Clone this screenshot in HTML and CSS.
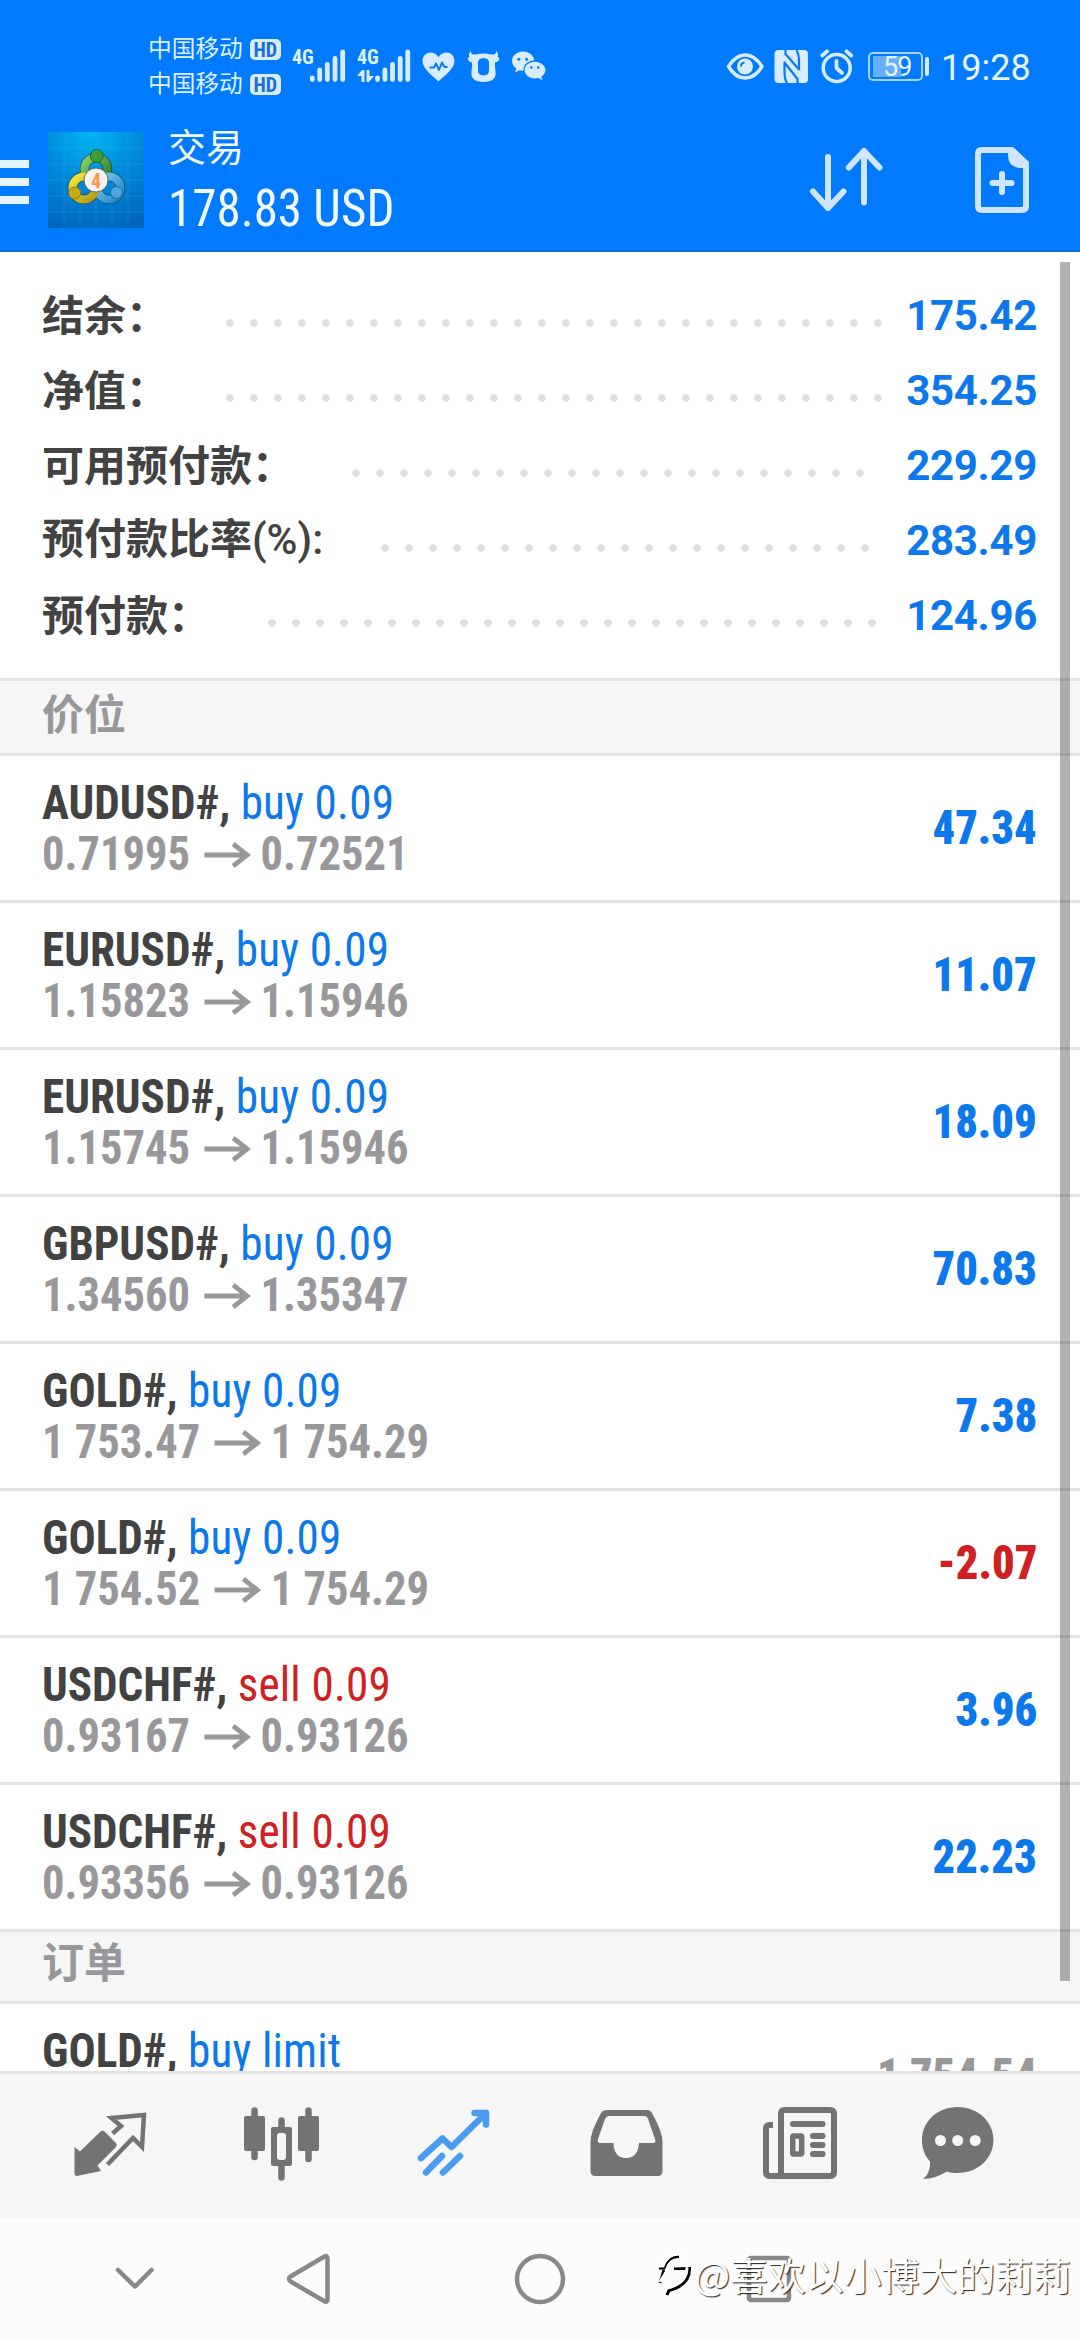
FILE: index.html
```html
<!DOCTYPE html>
<html lang="zh-CN">
<head>
<meta charset="utf-8">
<title>交易</title>
<link rel="stylesheet" href="styles.css">
</head>
<body>
<div class="screen">
  <header class="top">
    <div class="status">
      <div class="carriers">
        <div class="carrier">中国移动<span class="hd">HD</span></div>
        <div class="carrier">中国移动<span class="hd">HD</span></div>
      </div>
      <svg class="signal" viewBox="291 48 56 36" width="56" height="36">
        <text x="292" y="64" class="net">4G</text>
        <g class="bars"><path d="M312.3 77.800V79.500M319.700 70V79.500M327.300 64.300V79.500M335 58.300V79.500M342.700 51.800V79.500"/></g>
      </svg>
      <svg class="signal2" viewBox="356 48 56 36" width="56" height="36">
        <text x="357" y="64" class="net">4G</text>
        <g class="bars"><path d="M377.500 77.800V79.500M384.900 70V79.500M392.500 64.300V79.500M400.200 58.300V79.500M407.800 51.800V79.500"/></g>
        <path class="lit" d="M362 70h2.500v12h-3v-6h-4.500zM366.500 70h3v6h4.500l-5 6h-2.500z"/>
      </svg>
      <svg class="heart" viewBox="421 48 35 36" width="35" height="36">
        <path class="lit" d="M438.500 81.500C433 76 422.500 69 422.500 61C422.500 51.500 434 49.500 438.500 57C443 49.500 454.500 51.500 454.500 61C454.500 69 444 76 438.500 81.500Z"/>
        <path class="cut" stroke-width="1.900" d="M429.500 67.500H434L436 63.500L439 70L442 62.500L444.500 67H447.500"/>
      </svg>
      <svg class="ox" viewBox="467 48 33 36" width="33" height="36">
        <path class="lit" fill-rule="evenodd" d="M470.500 51C471 54 473 55 476 54.500Q483.500 52.500 491 54.500C494 55 496 54 496.500 51Q499 54.500 497.500 57L499.500 58Q499 62 495 62.500Q494.500 66 495.500 71Q497 82 483.500 82Q470 82 471.500 71Q472.500 66 472 62.500Q468 62 467.500 58L469.500 57Q468 54.500 470.500 51ZM483.500 58Q477.500 58 478 64V69Q477.500 75.500 483.500 75.500Q489.500 75.500 489 69V64Q489.500 58 483.500 58Z"/>
      </svg>
      <svg class="wechat" viewBox="511 48 36 36" width="36" height="36">
        <path class="lit" d="M523 51.500c-6.200 0-11 4.300-11 9.500c0 3.200 1.700 5.800 4.300 7.500l-1.300 4l4.500-2.300c1.500.5 3 .7 4.500.6c6-.2 10.300-4.500 10.300-9.800c0-5.200-5-9.500-11.300-9.500z"/>
        <ellipse cx="534.800" cy="70" rx="11.400" ry="9.800" fill="#007aff"/>
        <path class="lit" d="M534.800 61.800c-5.600 0-10.200 3.600-10.200 8.300s4.600 8.300 10.200 8.300c1.400 0 2.500-.2 3.600-.5l4 2.300l-1-3.500c2.500-1.600 4-3.900 4-6.600c0-4.700-5-8.300-10.600-8.300z"/>
        <g fill="#007aff"><circle cx="518.800" cy="59.200" r="1.500"/><circle cx="526.600" cy="59.200" r="1.500"/><circle cx="531.300" cy="67.500" r="1.300"/><circle cx="538.200" cy="67.500" r="1.300"/></g>
      </svg>
      <svg class="eye" viewBox="726 48 38 36" width="38" height="36">
        <path class="ln" stroke-width="3.500" d="M728.500 66.500Q735.500 55 745.200 55T762 66.500Q755 78 745.200 78T728.500 66.500Z"/>
        <circle class="lit" cx="745" cy="66.500" r="8"/>
        <path class="cut" stroke-width="2" d="M741 66.500Q741 63 744.500 62.500"/>
      </svg>
      <svg class="nfc" viewBox="774 48 35 36" width="35" height="36">
        <rect class="lit" x="774.500" y="50" width="33.500" height="33" rx="4"/>
        <path class="cut" stroke-width="2.200" d="M785.500 50V54L799 69.500V60Q799 54 796.500 50M797.500 83V79L784.500 62.500V72Q784.500 79 787 83"/>
      </svg>
      <svg class="alarm" viewBox="819 48 36 36" width="36" height="36">
        <circle class="ln" cx="836.700" cy="68" r="13.500" stroke-width="3.500"/>
        <path class="ln" stroke-width="3.800" d="M836.500 61V68L842 73M822.300 55.500L827 51.300M851.200 55.500L846.500 51.300"/>
      </svg>
      <div class="battery"><span class="level">59</span></div>
      <span class="cap"></span>
      <span class="clock">19:28</span>
    </div>
    <div class="appbar">
      <div class="menu"><i></i><i></i><i></i></div>
      <svg class="logo" viewBox="0 0 96 96" width="96" height="96">
        <defs>
          <radialGradient id="sky" cx=".45" cy="0" r="1.050"><stop offset="0" stop-color="#00b4f2"/><stop offset=".5" stop-color="#0089da"/><stop offset="1" stop-color="#0066bd"/></radialGradient>
          <linearGradient id="gr" x1="0" y1="0" x2="1" y2="1"><stop offset="0" stop-color="#8ccf6a"/><stop offset="1" stop-color="#237a22"/></linearGradient>
          <linearGradient id="ye" x1="0" y1="0" x2="1" y2="1"><stop offset="0" stop-color="#f2e63c"/><stop offset="1" stop-color="#b39a14"/></linearGradient>
          <linearGradient id="bl" x1="0" y1="0" x2="1" y2="1"><stop offset="0" stop-color="#7ccdf5"/><stop offset="1" stop-color="#2283c4"/></linearGradient>
        </defs>
        <rect width="96" height="96" fill="url(#sky)"/>
        <path d="M0 16H96M0 32H96M0 48H96M0 64H96M0 80H96M16 0V96M32 0V96M48 0V96M64 0V96M80 0V96" stroke="#5cc4f5" stroke-opacity=".16"/>
        <g fill="none" stroke="#14506a" stroke-width="9.500"><circle cx="48" cy="37" r="11.500"/><circle cx="36" cy="56" r="11.500"/><circle cx="61" cy="56" r="11.500"/></g>
        <g fill="none" stroke-width="8"><circle cx="48" cy="37" r="11.500" stroke="url(#gr)"/><circle cx="61" cy="56" r="11.500" stroke="url(#bl)"/><circle cx="36" cy="56" r="11.500" stroke="url(#ye)"/></g>
        <g stroke-width="1"><circle cx="48.700" cy="24" r="6.500" fill="#3f9a3a" stroke="#1c6b2a"/><circle cx="26.700" cy="61" r="6" fill="#c9a91c" stroke="#8f7c18"/><circle cx="68.500" cy="60.500" r="6" fill="#4aa6dc" stroke="#1b6ca5"/></g>
        <circle cx="48" cy="48" r="12" fill="#f4f2f4" stroke="#4a5a3a" stroke-width=".8"/>
        <text x="48" y="55.500" text-anchor="middle" class="four">4</text>
      </svg>
      <div class="heading">
        <div class="title">交易</div>
        <div class="balance">178.83 USD</div>
      </div>
      <svg class="sort" viewBox="808 144 78 72" width="78" height="72">
        <path class="act" d="M828 157V208M813 191.500L828 208L843.500 191.500M864 202.500V151M848.800 167.500L864 151L879.500 167.500"/>
      </svg>
      <svg class="newdoc" viewBox="972 144 60 72" width="60" height="72">
        <path class="act" stroke-linecap="butt" d="M982 150H1012L1026 164V206Q1026 210 1022 210H982Q978 210 978 206V154Q978 150 982 150Z"/>
        <path fill="#d0e5ff" d="M1008 148H1014L1029 162V168H1020Q1008 167 1008 155Z"/>
        <path class="act" d="M1002 174V192M992.500 183H1011.500"/>
      </svg>
    </div>
  </header>

  <main class="content">
    <section class="summary">
      <div class="sum"><span class="label">结余：</span><span class="dots" style="width:672px"></span><span class="num">175.42</span></div>
      <div class="sum"><span class="label">净值：</span><span class="dots" style="width:672px"></span><span class="num">354.25</span></div>
      <div class="sum"><span class="label">可用预付款：</span><span class="dots" style="width:528px"></span><span class="num">229.29</span></div>
      <div class="sum"><span class="label">预付款比率<span class="pct">(%):</span></span><span class="dots" style="width:504px"></span><span class="num">283.49</span></div>
      <div class="sum"><span class="label">预付款：</span><span class="dots" style="width:624px"></span><span class="num">124.96</span></div>
    </section>
    <h2 class="section first">价位</h2>
    <ul class="list">
      <li class="row"><div><p class="sym">AUDUSD#, <span class="buy">buy 0.09</span></p><p class="price">0.71995<svg class="arr" viewBox="0 0 50 26"><path d="M0 13H46M31 2L46 13L31 24"/></svg>0.72521</p></div><b class="val">47.34</b></li>
      <li class="row"><div><p class="sym">EURUSD#, <span class="buy">buy 0.09</span></p><p class="price">1.15823<svg class="arr" viewBox="0 0 50 26"><path d="M0 13H46M31 2L46 13L31 24"/></svg>1.15946</p></div><b class="val">11.07</b></li>
      <li class="row"><div><p class="sym">EURUSD#, <span class="buy">buy 0.09</span></p><p class="price">1.15745<svg class="arr" viewBox="0 0 50 26"><path d="M0 13H46M31 2L46 13L31 24"/></svg>1.15946</p></div><b class="val">18.09</b></li>
      <li class="row"><div><p class="sym">GBPUSD#, <span class="buy">buy 0.09</span></p><p class="price">1.34560<svg class="arr" viewBox="0 0 50 26"><path d="M0 13H46M31 2L46 13L31 24"/></svg>1.35347</p></div><b class="val">70.83</b></li>
      <li class="row"><div><p class="sym">GOLD#, <span class="buy">buy 0.09</span></p><p class="price">1 753.47<svg class="arr" viewBox="0 0 50 26"><path d="M0 13H46M31 2L46 13L31 24"/></svg>1 754.29</p></div><b class="val">7.38</b></li>
      <li class="row"><div><p class="sym">GOLD#, <span class="buy">buy 0.09</span></p><p class="price">1 754.52<svg class="arr" viewBox="0 0 50 26"><path d="M0 13H46M31 2L46 13L31 24"/></svg>1 754.29</p></div><b class="val loss">-2.07</b></li>
      <li class="row"><div><p class="sym">USDCHF#, <span class="sell">sell 0.09</span></p><p class="price">0.93167<svg class="arr" viewBox="0 0 50 26"><path d="M0 13H46M31 2L46 13L31 24"/></svg>0.93126</p></div><b class="val">3.96</b></li>
      <li class="row"><div><p class="sym">USDCHF#, <span class="sell">sell 0.09</span></p><p class="price">0.93356<svg class="arr" viewBox="0 0 50 26"><path d="M0 13H46M31 2L46 13L31 24"/></svg>0.93126</p></div><b class="val">22.23</b></li>
    </ul>
    <h2 class="section">订单</h2>
    <ul class="list">
      <li class="row"><p class="sym order">GOLD#, <span class="buy">buy limit</span></p><b class="val pending">1 754.54</b></li>
    </ul>
    <div class="scrollbar"></div>
  </main>

  <nav class="tabs">
    <svg viewBox="24 2074 172 144" width="172" height="144">
      <path class="g" d="M74.500 2147L80 2151.500L100.500 2131.500Q102.500 2130 104.500 2131.500L116 2143Q117.500 2145 116 2147L97.500 2165.500L101 2171L77 2176Q74.500 2176 74.500 2173Z"/>
      <path class="o" stroke-width="4.500" d="M112.600 2133.500L121 2126L111.500 2118L144 2115L142 2147L133 2138L107.500 2164.500"/>
    </svg>
    <svg viewBox="196 2074 172 144" width="172" height="144">
      <g class="g"><rect x="244" y="2116" width="21" height="35" rx="2"/><rect x="298" y="2116" width="21" height="35" rx="2"/><path fill-rule="evenodd" d="M273 2127H290Q292 2127 292 2129V2164Q292 2166 290 2166H273Q271 2166 271 2164V2129Q271 2127 273 2127ZM280 2133Q277 2133 277 2136V2157Q277 2160 280 2160H283Q286 2160 286 2157V2136Q286 2133 283 2133Z"/></g>
      <path class="o" stroke-width="6.500" stroke-linecap="round" d="M254.500 2110.500V2157M308.500 2110.500V2159M281.500 2120.500V2128M281.500 2165V2177.500"/>
    </svg>
    <svg viewBox="368 2074 172 144" width="172" height="144">
      <path class="on" d="M421 2158L442.500 2138.500L451.500 2147L486 2113M474.500 2113H486V2124.500M426 2172.500L442 2156M443 2172.500L460 2156"/>
    </svg>
    <svg viewBox="540 2074 172 144" width="172" height="144">
      <path class="g" fill-rule="evenodd" d="M607 2110H647Q651 2110 653 2115Q662.500 2132 662.500 2142V2171Q662.500 2176 657.500 2176H595.500Q590.500 2176 590.500 2171V2142Q590.500 2132 600 2115Q602 2110 607 2110ZM609 2116Q606.500 2116 605 2119L598 2139Q597 2143 600 2143H613.500Q614 2158 626 2158Q638 2158 639 2143H653Q656.500 2143 655 2139L648 2119Q647 2116 644 2116Z"/>
    </svg>
    <svg viewBox="712 2074 172 144" width="172" height="144">
      <path class="o" stroke-width="6" d="M773 2125H770Q766 2125 766 2129V2172Q766 2176 770 2176H781M784.500 2110H830Q834 2110 834 2114V2172Q834 2176 830 2176H781V2114Q781 2110 784.500 2110Z"/>
      <path class="o" stroke-width="6" stroke-linecap="round" d="M793 2124H822.500M813 2136H822.500M813 2145H822.500M813 2154H822.500"/>
      <rect class="o" stroke-width="5.500" x="792.700" y="2136" width="9" height="18" rx="1"/>
    </svg>
    <svg viewBox="884 2074 172 144" width="172" height="144">
      <path class="g" d="M957.700 2107C978 2107 993.500 2122 993.500 2140S978 2173 957.700 2173C953 2173 950 2172.500 947 2171.500C940 2176 931 2179 923 2179C928 2175 930.500 2169 930 2161.500C925 2156 922 2149 922 2140C922 2122 937 2107 957.700 2107Z"/>
      <g fill="#f6f6f6"><circle cx="940.500" cy="2140.500" r="5.500"/><circle cx="957.700" cy="2140.500" r="5.500"/><circle cx="975.200" cy="2140.500" r="5.500"/></g>
    </svg>
  </nav>

  <footer class="keys">
    <svg viewBox="50 2218 170 122" width="170" height="122"><path d="M118 2270L135 2286.500L151.500 2270"/></svg>
    <svg viewBox="220 2218 205 122" width="205" height="122"><path d="M290.500 2276.500L324.500 2256.500Q327.500 2255 327.500 2259V2299Q327.500 2303 324.500 2301.300L290.500 2281.500Q287.500 2279 290.500 2276.500Z"/></svg>
    <svg viewBox="425 2218 230 122" width="230" height="122"><circle cx="540" cy="2279" r="23"/></svg>
    <svg viewBox="655 2218 230 122" width="230" height="122"><rect x="749" y="2258" width="40" height="42" rx="2"/></svg>
  </footer>
  <div class="watermark">
    <svg viewBox="656 2254 38 56" width="38" height="56"><g fill="none" stroke-width="3"><path stroke="#000" d="M659 2276H664Q668 2264 679 2264.500M674 2276.500H689.500Q690 2293 669 2298.500L667 2303M660 2291L664 2278"/><path stroke="#fff" d="M658 2274H663Q667 2262 679 2262Q687 2263 687.500 2273.500L673 2274M687 2275Q687 2291 667 2296M660 2290L668 2277"/></g></svg>
    <span>@喜欢以小博大的莉莉</span>
  </div>
</div>
</body>
</html>
```
FILE: styles.css
```css
* { box-sizing: border-box; margin: 0; padding: 0; }
body {
  width: 1080px;
  height: 2340px;
  overflow: hidden;
  background: #fff;
  font-family: Roboto, "Noto Sans CJK SC", sans-serif;
}
.screen { position: relative; display: flex; flex-direction: column; height: 2340px; }
svg { display: block; flex: none; overflow: visible; }

/* header */
.top { height: 252px; flex: none; background: #007aff; border-bottom: 2px solid #0d6cd9; }
.status { display: flex; align-items: flex-start; height: 108px; padding-left: 148px; color: #dff0ff; }
.status > svg { margin-top: 48px; }
.carriers { width: 136px; padding-top: 32px; }
.carrier { display: flex; align-items: center; height: 35px; font-size: 23.7px; line-height: 35px; }
.hd {
  width: 31px; height: 21px; margin-left: 7px;
  border-radius: 5px; background: #d9ecff; color: #1a6fd6;
  font: 700 20px/22px "Roboto Condensed", sans-serif; text-align: center;
}
.net { font: 700 20px "Roboto Condensed", sans-serif; fill: #dff0ff; }
.bars { fill: none; stroke: #d9ecff; stroke-width: 4.8; stroke-linecap: round; }
.lit { fill: #d9ecff; }
.ln { fill: none; stroke: #d9ecff; stroke-linecap: round; stroke-linejoin: round; }
.cut { fill: none; stroke: #0a78f5; stroke-linejoin: round; }
.signal { margin-left: 7px; }
.signal2 { margin-left: 9px; }
.heart { margin-left: 9px; }
.ox { margin-left: 11px; }
.wechat { margin-left: 11px; }
.eye { margin-left: 179px; }
.nfc, .alarm { margin-left: 10px; }
.battery {
  width: 55px; height: 29px; margin: 52px 0 0 13px; padding: 2px;
  border: 2px solid #a9d3ff; border-radius: 5px;
}
.level {
  display: block; height: 21px; padding-left: 11px;
  background: linear-gradient(#66affe, #66affe) no-repeat 1px 0 / 28px 21px;
  font: 400 27px/23px "Roboto", sans-serif; letter-spacing: -1px; color: #e6f4ff;
}
.cap { width: 4px; height: 19px; margin: 57px 0 0 2px; border-radius: 2px; background: #d9ecff; }
.clock { margin: 47px 0 0 12px; font-size: 36px; line-height: 42px; color: #e6f4ff; }

.appbar { display: flex; align-items: flex-start; }
.menu { display: grid; gap: 10px; width: 29px; margin: 52px 19px 0 0; }
.menu i { height: 8px; background: #e6f4ff; }
.logo { margin-top: 24px; }
.four { font: 700 20px "Roboto Condensed", sans-serif; fill: #f59a4a; }
.heading { width: 640px; padding-left: 24px; color: #f2f9ff; }
.title { margin-top: 13px; font-size: 38px; line-height: 54px; }
.balance {
  margin-top: 2px; font: 400 52.5px/62px "Roboto Condensed", sans-serif;
  transform: scaleX(.935); transform-origin: 0 50%;
}
.sort { margin: 36px 0 0 24px; }
.newdoc { margin: 36px 0 0 86px; }
.act { fill: none; stroke: #d0e5ff; stroke-width: 6; stroke-linecap: round; stroke-linejoin: round; }

/* scrolling content */
.content { position: relative; height: 1819px; flex: none; overflow: hidden; }
.summary { height: 426px; padding: 25px 43px 0 42px; }
.sum { display: flex; align-items: center; height: 75px; }
.label { padding-bottom: 4px; font: 700 42px/60px "Noto Sans CJK SC", sans-serif; color: #424242; white-space: nowrap; }
.pct { font-family: Roboto, sans-serif; font-weight: 500; }
.dots {
  height: 8px; margin: 17px 0 0 50px;
  background: radial-gradient(circle at 12px 4px, #dedede 3.4px, transparent 4.1px) repeat-x 0 0 / 24px 8px;
}
.num { margin: 2px 0 0 auto; font-size: 42px; font-weight: 700; letter-spacing: -.3px; color: #0b78ec; }
.section {
  height: 72px; padding-left: 42px;
  background: #f6f6f6; border-bottom: 3px solid #e2e2e2;
  font: 700 42px/55px "Noto Sans CJK SC", sans-serif; color: #98989b;
}
.section.first { height: 78px; padding-top: 3px; border-top: 3px solid #e2e2e2; }
.list { list-style: none; }
.row {
  display: flex; justify-content: space-between; align-items: center;
  height: 147px; padding: 0 43px 0 42px; border-bottom: 3px solid #e2e2e2;
  font: 700 48px/51px "Roboto Condensed", sans-serif;
}
/* the list face is set slightly narrower than the condensed cut */
.sym { color: #424242; transform: scaleX(.94); transform-origin: 0 50%; white-space: nowrap; }
.price {
  display: flex; align-items: center; color: #98989b; white-space: pre;
  transform: scaleX(.928); transform-origin: 0 50%;
}
.order { align-self: flex-start; margin-top: 21px; }
.buy, .sell { font-weight: 400; letter-spacing: .2px; }
.buy { color: #0b78ec; }
.sell { color: #d02020; }
.arr { width: 50px; height: 26px; margin: 2px 11px 0 15px; fill: none; stroke: #98989b; stroke-width: 5; }
.val { margin-top: -2px; color: #0b78ec; transform: scaleX(.925); transform-origin: 100% 50%; }
.loss { color: #d02020; }
.pending { color: #98989b; }
.scrollbar { position: absolute; top: 10px; right: 10px; width: 10px; height: 1719px; background: rgba(0, 0, 0, .3); }

/* bottom tabs */
.tabs { display: flex; height: 147px; flex: none; padding-left: 24px; background: #f6f6f6; border-top: 3px solid #e2e2e2; }
.g { fill: #737373; }
.o { fill: none; stroke: #737373; }
.on { fill: none; stroke: #4a9bf2; stroke-width: 6.500; stroke-linecap: round; stroke-linejoin: round; }

/* system keys */
.keys { display: flex; height: 122px; padding-left: 50px; background: #fcfcfc; }
.keys svg { fill: none; stroke: #888; stroke-width: 4.500; stroke-linecap: round; stroke-linejoin: round; }
.watermark {
  position: absolute; right: 9px; bottom: 38px; display: flex; align-items: center;
  font: 400 37.900px/56px "Noto Sans CJK SC", sans-serif; color: #fff;
  text-shadow: 1px 1px 1px #222; white-space: nowrap;
}
```
